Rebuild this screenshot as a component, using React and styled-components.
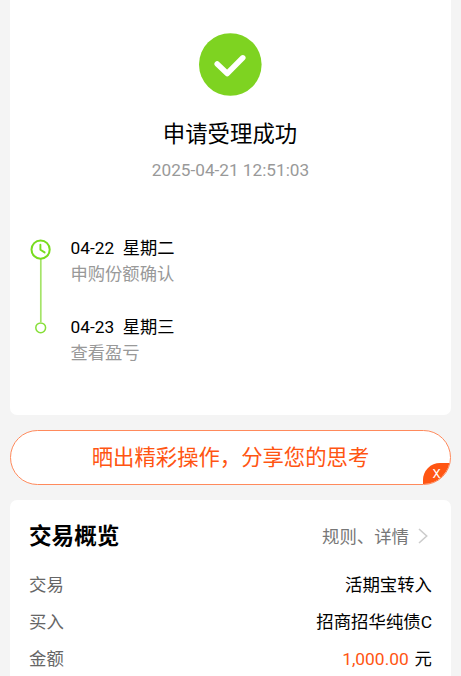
import styled, { createGlobalStyle } from "styled-components";

const GlobalStyle = createGlobalStyle`
  * {
    box-sizing: border-box;
  }
  body {
    margin: 0;
    background: #f4f4f4;
    overflow: hidden;
    font-family: Roboto, "Noto Sans CJK SC", sans-serif;
  }
`;

const Page = styled.main`
  height: 676px;
  overflow: hidden;
  padding: 0 10px;
  display: flex;
  flex-direction: column;
`;

const ResultCard = styled.section`
  flex: none;
  height: 415px;
  padding: 33px 20px 0;
  background: #fff;
  border-radius: 0 0 7px 7px;
  display: flex;
  flex-direction: column;
  align-items: center;
`;

const Title = styled.h1`
  margin: 22px 0 0;
  padding-right: 1px;
  font-size: 22.4px;
  font-weight: 400;
  line-height: 32px;
  color: #000;
`;

const Time = styled.div`
  margin-top: 8px;
  font-size: 17.2px;
  line-height: 24px;
  color: #999;
`;

const Timeline = styled.div`
  width: 100%;
  margin-top: 53px;
  display: flex;
  gap: 18.5px;
`;

const Steps = styled.div`
  display: flex;
  flex-direction: column;
  gap: 26px;
`;

const StepDate = styled.div`
  font-size: 17.3px;
  line-height: 26px;
  color: #000;
  white-space: pre;
`;

const StepText = styled.div`
  font-size: 17.3px;
  line-height: 27px;
  color: #999;
`;

const Banner = styled.div`
  position: relative;
  flex: none;
  height: 55px;
  margin: 15px 0;
  padding-bottom: 5px;
  border: 1px solid #ff8a5c;
  border-radius: 28px;
  background: #fff;
  overflow: hidden;
  display: flex;
  align-items: center;
  justify-content: center;
  font-size: 21.35px;
  color: #ff5512;
`;

const Close = styled.button`
  position: absolute;
  right: 0;
  bottom: 0;
  width: 27px;
  height: 21px;
  padding: 0;
  border: 0;
  border-radius: 17px 0 0 0;
  background: #ff5512;
  color: #fff;
  font-family: Roboto, sans-serif;
  font-size: 13px;
  line-height: 21px;
`;

const Overview = styled.section`
  flex: none;
  height: 200px;
  padding: 17px 19px 0;
  background: #fff;
  border-radius: 7px 7px 0 0;
`;

const OverviewHead = styled.div`
  display: flex;
  align-items: center;
  justify-content: space-between;
  height: 37px;
  margin-bottom: 11px;
`;

const Heading = styled.h2`
  margin: 0;
  padding-bottom: 2px;
  font-size: 22.6px;
  font-weight: 700;
  color: #000;
`;

const More = styled.span`
  display: flex;
  align-items: center;
  gap: 9px;
  margin-right: 4px;
  font-size: 17.4px;
  color: #777;
`;

const Row = styled.div`
  display: flex;
  align-items: center;
  justify-content: space-between;
  height: 37px;
  font-size: 17.4px;
`;

const Label = styled.span`
  color: #666;
`;

const Value = styled.span`
  color: #000;
`;

const Amount = styled.span`
  margin-right: 1.5px;
  color: #ff5512;
`;

const steps = [
  { date: "04-22  星期二", text: "申购份额确认" },
  { date: "04-23  星期三", text: "查看盈亏" },
];

function SuccessIcon() {
  return (
    <svg width="63" height="63" viewBox="0 0 63 63" fill="none">
      <circle cx="31.3" cy="31.5" r="31.3" fill="#7ed321" />
      <path d="M18.2 31L28.2 40.5L43.8 24.8" stroke="#fff" strokeWidth="5.5" strokeLinecap="round" strokeLinejoin="round" />
    </svg>
  );
}

function TimelineTrack() {
  return (
    <svg width="22" height="104" viewBox="0 0 22 104" fill="none">
      <path d="M10.8 24V87" stroke="#a5e468" strokeWidth="1.7" />
      <circle cx="10.6" cy="14.6" r="9.1" stroke="#78dc1e" strokeWidth="2" />
      <path d="M10.4 9.8V14.8L14.6 17.4" stroke="#78dc1e" strokeWidth="1.9" strokeLinecap="round" strokeLinejoin="round" />
      <circle cx="10.7" cy="92.8" r="4.9" stroke="#86df38" strokeWidth="1.5" />
    </svg>
  );
}

function App() {
  return (
    <>
      <GlobalStyle />
      <Page>
        <ResultCard>
          <SuccessIcon />
          <Title>申请受理成功</Title>
          <Time>2025-04-21 12:51:03</Time>
          <Timeline>
            <TimelineTrack />
            <Steps>
              {steps.map((step) => (
                <div key={step.date}>
                  <StepDate>{step.date}</StepDate>
                  <StepText>{step.text}</StepText>
                </div>
              ))}
            </Steps>
          </Timeline>
        </ResultCard>

        <Banner>
          晒出精彩操作，分享您的思考
          <Close>X</Close>
        </Banner>

        <Overview>
          <OverviewHead>
            <Heading>交易概览</Heading>
            <More>
              规则、详情
              <svg width="10" height="16" viewBox="0 0 10 16" fill="none">
                <path d="M1 1L8.7 8L1 15" stroke="#ccc" strokeWidth="1.6" />
              </svg>
            </More>
          </OverviewHead>
          <Row>
            <Label>交易</Label>
            <Value>活期宝转入</Value>
          </Row>
          <Row>
            <Label>买入</Label>
            <Value>招商招华纯债C</Value>
          </Row>
          <Row>
            <Label>金额</Label>
            <Value>
              <Amount>1,000.00</Amount> 元
            </Value>
          </Row>
        </Overview>
      </Page>
    </>
  );
}

export default App;
